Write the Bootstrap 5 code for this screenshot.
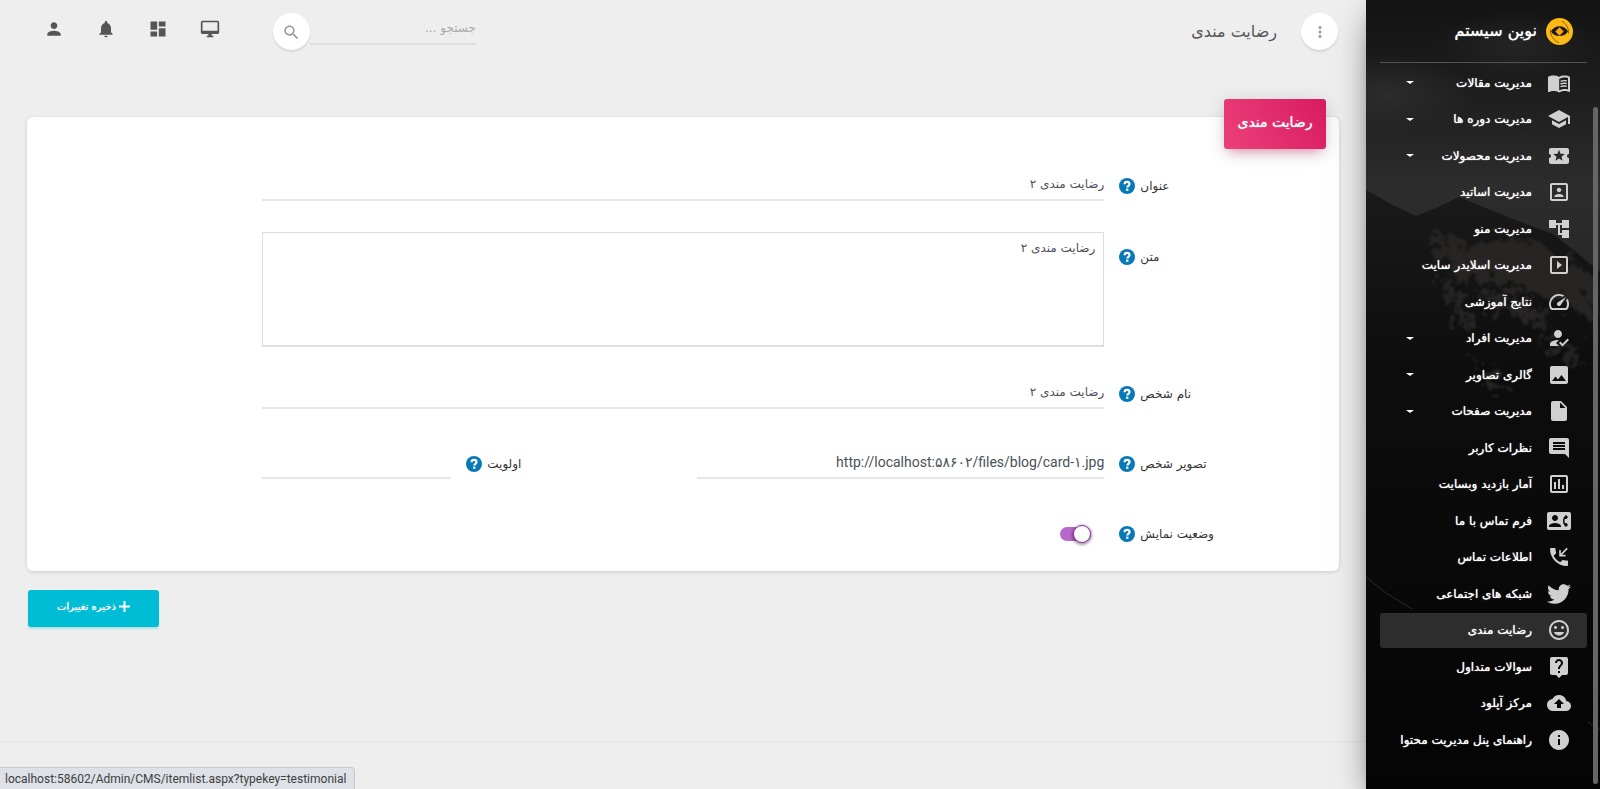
<!DOCTYPE html>
<html lang="fa" dir="rtl">
<head>
<meta charset="utf-8">
<meta name="viewport" content="width=device-width, initial-scale=1">
<title>رضایت مندی</title>
<link href="https://cdn.jsdelivr.net/npm/bootstrap@5.3.0/dist/css/bootstrap.min.css" rel="stylesheet">
<style>
  body { background: #eee; color: #3c4858; font-family: "DejaVu Sans", sans-serif; font-size: 13px; line-height: 20px; }
  svg { fill: currentColor; flex: none; }

  /* sidebar */
  .side { width: 234px; height: 100vh; min-height: 760px; flex: none; z-index: 2; background: #0a0a0a; overflow: visible;
    box-shadow: 0 16px 38px -12px rgba(0,0,0,.56), 0 4px 25px rgba(0,0,0,.12), 0 8px 10px -5px rgba(0,0,0,.2); }
  .side-art { inset: 0; width: 100%; height: 100%; }
  .side-thumb { left: auto; right: 2px; top: 107px; bottom: 5px; width: 5px; border-radius: 3px; background: #666; }
  .brand { margin: 0 13px 0 14px; height: 63px; border-bottom: 1px solid #525252; padding-right: 14px; gap: 9px; color: #fff; font-size: 16px; text-shadow: 0 0 1px #fff; }
  .menu { padding: 2px 13px 30px 14px; display: grid; grid-auto-rows: 1fr; }
  .menu a { height: 35px; border-radius: 3px; padding: 0 16px; gap: 15px; color: #fff; font-size: 12px; text-decoration: none; text-shadow: 0 0 1px #fff; }
  .menu a.active { background: rgba(200,200,200,.2); }
  .menu svg { color: #d0d0d0; }
  .menu .caret { margin-right: auto; margin-left: 10px; border: 4px solid transparent; border-top: 3px solid #fff; border-bottom: 0; }

  /* top bar */
  .topbar { padding: 13px 28px 0; }
  .round-btn { width: 37px; height: 37px; border: 0; border-radius: 50%; background: #fff; color: #999; box-shadow: 0 2px 2px rgba(0,0,0,.1); padding: 0; }
  .page-name { font-size: 16px; color: #555; margin: 0; font-weight: 400; }
  .tools { margin-right: 37px; }
  .tool-btn { width: 52px; height: 32px; border: 0; background: none; color: #555; padding: 0; }
  .line-input { height: 36px; border: 0; border-bottom: 2px solid #e7e7e7; border-radius: 0; background: none; padding: 3px 0 0; font-size: 12px; color: #495057; box-shadow: none; }
  .search-box { width: 166px; height: 32px; border-bottom-color: #dfdfdf; font-size: 12px; padding-top: 0; }
  .search-box::placeholder { color: #aaa; }

  /* form card */
  .panel { margin: 67px 27px 0; border: 0; border-radius: 6px; background: #fff; box-shadow: 0 1px 4px rgba(0,0,0,.14); padding: 0 24px 22px; }
  .panel-tag { width: 102px; height: 50px; margin: -18px -11px 16px 0; border-radius: 3px; background: linear-gradient(60deg, #ec407a, #d81b60); color: #fff; font-size: 14px; font-weight: 400; padding-bottom: 4px; text-shadow: 0 0 1px #fff;
    box-shadow: 0 4px 20px rgba(0,0,0,.14), 0 7px 10px -5px rgba(233,30,99,.4); }
  .field { --bs-gutter-x: 0; margin-bottom: 34px; }
  .field.near { margin-bottom: 31px; }
  .field.tall { margin-bottom: 26px; }
  .field.last { margin-bottom: 0; min-height: 36px; }
  .cap { padding: 11px 0 0 15px; font-size: 12px; color: #333; gap: 5px; justify-content: flex-end; align-items: center; height: 31px; }
  .cap.low { padding-top: 15px; height: 35px; }
  .cap svg { color: #0878b8; }
  .box-input { height: 115px; border: 1px solid #dcdce4; border-bottom: 2px solid #dedede; border-radius: 0; padding: 5px 8px; font-size: 12px; line-height: 20px; color: #495057; resize: none; }
  .url-col { padding-left: 14px; }
  .url { font-family: Roboto, "DejaVu Sans", sans-serif; font-size: 14px; }
  .prio-cap { width: 55%; }
  .prio-in { width: 45%; }
  .switch { appearance: none; width: 31px; height: 14px; border-radius: 7px; background: #b868c8; margin: 14px 13px 0 0; position: relative; }
  .switch::before { content: ""; position: absolute; right: 0; top: -2px; width: 18px; height: 18px; border-radius: 50%; border: 1px solid #9c27b0; background: #fff; box-shadow: 0 1px 3px 1px rgba(0,0,0,.4); }
  .save { margin: 19px 28px 0; width: 131px; height: 37px; border: 0; border-radius: 3px; background: #00bcd4; color: #fff; font-size: 10px; gap: 3px; padding: 0 0 4px; text-shadow: 0 0 1px #fff; box-shadow: 0 2px 2px rgba(0,188,212,.25); }
  .foot { height: 48px; border-top: 1px solid #e5e5e5; }
  .status { left: 0; bottom: 0; height: 22px; padding: 0 8px 0 5px; background: #dee1e6; border: 1px solid #c8cacf; border-width: 1px 1px 0 0; border-radius: 0 4px 0 0; font-family: Roboto, sans-serif; font-size: 12px; line-height: 22px; color: #3c4043; z-index: 3; }
</style>
</head>
<body>
<svg class="d-none">
  <symbol id="help" viewBox="0 0 16 16"><circle cx="8" cy="8" r="8"/><path d="M5.600 6.200C5.600 4.600 6.600 3.900 8 3.900s2.500.800 2.500 2.100c0 1.800-2.200 1.800-2.200 3.400" fill="none" stroke="#fff" stroke-width="2.200"/><rect x="7.100" y="10.600" width="2.300" height="2.200" fill="#fff"/></symbol>
</svg>
<div class="d-flex min-vh-100">
  <aside class="side position-relative d-flex flex-column">
    <svg class="side-art position-absolute" viewBox="0 0 234 789" preserveAspectRatio="none" aria-hidden="true">
      <defs>
        <linearGradient id="sky" x1="0" y1="0" x2="0" y2="1"><stop offset="0" stop-color="#131313"/><stop offset=".12" stop-color="#1e1e1e"/><stop offset=".24" stop-color="#2d2d2d"/><stop offset=".34" stop-color="#282727"/></linearGradient>
        <linearGradient id="rock" gradientUnits="userSpaceOnUse" x1="0" y1="190" x2="0" y2="789"><stop offset="0" stop-color="#1b1a1a"/><stop offset=".3" stop-color="#0d0d0d"/><stop offset="1" stop-color="#040404"/></linearGradient>
        <radialGradient id="cloud"><stop offset="0" stop-color="#2c2c2c"/><stop offset="1" stop-color="#2c2c2c" stop-opacity="0"/></radialGradient>
        <filter id="edge" x="-10%" y="-10%" width="120%" height="120%" color-interpolation-filters="sRGB"><feTurbulence type="fractalNoise" baseFrequency=".09" numOctaves="5" seed="4" result="n"/><feDisplacementMap in="SourceGraphic" in2="n" scale="50" xChannelSelector="R" yChannelSelector="G"/><feGaussianBlur stdDeviation="1"/></filter>
      </defs>
      <rect width="234" height="789" fill="url(#sky)"/>
      <ellipse cx="150" cy="45" rx="80" ry="34" fill="url(#cloud)" opacity=".6"/><ellipse cx="20" cy="95" rx="90" ry="40" fill="url(#cloud)"/>
      <path d="M0 190 25 204 50 216 72 207 93 197 110 204 127 211 160 224 187 234 210 252 234 272V789H0z" fill="url(#rock)"/>
      <g fill="#272524" filter="url(#edge)">
        <path d="M62 232 85 238 112 244 135 238 165 242 200 256 226 280V322L205 305 170 296 140 286 105 282 90 278 66 250zM75 280 90 290 104 330 92 324zM110 290 140 298 170 306 190 330 160 318 125 306zM90 350 115 372 140 376 150 392 120 384zM170 330 210 350 220 366 190 356z"/>
      </g>
      <path d="M0 577l20 16 26 16M222 722l12 8" stroke="#2a2a2a" fill="none"/>
    </svg>
    <span class="side-thumb position-absolute"></span>
    <div class="brand position-relative d-flex align-items-center">
      <svg width="27" height="27" viewBox="0 0 27 27"><circle cx="13.500" cy="13.500" r="13.500" fill="#fdb913"/><path d="M5 13.500C8.500 6.500 18.500 6.500 22 13.500 18.500 19.500 8.500 19.500 5 13.500z" fill="#1a1a1a"/><path d="M13.500 9.300l4.200 4.200-4.200 4.200-4.200-4.200z" fill="#f8a010"/><path d="M4.500 11.500c-.5 6 3 11 8.500 13.300M22.500 15.500c.5-5-2-9.500-6.500-12.300" stroke="#7a5200" fill="none" stroke-width=".9"/></svg>
      <span>نوین سیستم</span>
    </div>
    <nav class="menu position-relative flex-fill">
      <a class="d-flex align-items-center" href="#"><svg width="24" height="24" viewBox="0 0 24 24"><path d="M21 5c-1.110-.35-2.330-.5-3.500-.5-1.950 0-4.050.4-5.500 1.500-1.450-1.100-3.550-1.500-5.500-1.500S2.450 4.900 1 6v14.650c0 .25.25.5.5.5.1 0 .15-.05.25-.05C3.100 20.450 5.050 20 6.500 20c1.950 0 4.050.4 5.500 1.500 1.350-.85 3.800-1.500 5.500-1.500 1.650 0 3.350.3 4.750 1.050.1.050.15.050.25.050.25 0 .5-.25.5-.5V6c-.6-.45-1.250-.75-2-1zm0 13.500c-1.100-.35-2.300-.5-3.500-.5-1.700 0-4.150.65-5.500 1.500V8c1.350-.85 3.800-1.500 5.500-1.500 1.200 0 2.400.15 3.500.5v11.500z"/><path d="M2 6.500c3-1.500 7-1.300 10.200.5v13c-3-1.500-7-1.500-10.200-.5z"/><path d="M13.500 10.300c2-.8 4-.9 6.200-.5M13.500 13c2-.8 4-.9 6.200-.5M13.500 15.700c2-.8 4-.9 6.200-.5" stroke="currentColor" stroke-width="1.400" fill="none"/></svg>مدیریت مقالات<span class="caret"></span></a>
      <a class="d-flex align-items-center" href="#"><svg width="24" height="24" viewBox="0 0 24 24"><path d="M5 13.180v4L12 21l7-3.820v-4L12 17l-7-3.820zM12 3L1 9l11 6 9-4.910V17h2V9L12 3z"/></svg>مدیریت دوره ها<span class="caret"></span></a>
      <a class="d-flex align-items-center" href="#"><svg width="24" height="24" viewBox="0 0 24 24"><path d="M20 12c0-1.100.9-2 2-2V6c0-1.100-.9-2-2-2H4c-1.100 0-1.990.9-1.990 2v4c1.100 0 1.990.9 1.990 2s-.89 2-2 2v4c0 1.100.9 2 2 2h16c1.100 0 2-.9 2-2v-4c-1.100 0-2-.9-2-2zm-4.420 4.800L12 14.500l-3.580 2.300 1.080-4.120-3.290-2.690 4.240-.25L12 5.800l1.540 3.950 4.240.25-3.290 2.690 1.090 4.110z"/></svg>مدیریت محصولات<span class="caret"></span></a>
      <a class="d-flex align-items-center" href="#"><svg width="24" height="24" viewBox="0 0 24 24"><path d="M12 12.250c1.240 0 2.250-1.010 2.250-2.250S13.240 7.750 12 7.750 9.750 8.760 9.750 10s1.010 2.250 2.250 2.250zm4.500 4c0-1.500-3-2.250-4.500-2.250s-4.500.75-4.500 2.250V17h9v-.75zM19 3H5c-1.100 0-2 .9-2 2v14c0 1.100.9 2 2 2h14c1.100 0 2-.9 2-2V5c0-1.100-.9-2-2-2zm0 16H5V5h14v14z"/></svg>مدیریت اساتید</a>
      <a class="d-flex align-items-center" href="#"><svg width="24" height="24" viewBox="0 0 24 24"><path d="M22 11V3h-7v3H9V3H2v8h7V8h2v10h4v3h7v-8h-7v3h-2V8h2v3z"/></svg>مدیریت منو</a>
      <a class="d-flex align-items-center" href="#"><svg width="24" height="24" viewBox="0 0 24 24"><path d="M10 8v8l5-4-5-4zm9-5H5c-1.100 0-2 .9-2 2v14c0 1.100.9 2 2 2h14c1.100 0 2-.9 2-2V5c0-1.100-.9-2-2-2zm0 16H5V5h14v14z"/></svg>مدیریت اسلایدر سایت</a>
      <a class="d-flex align-items-center" href="#"><svg width="24" height="24" viewBox="0 0 24 24"><path d="M20.380 8.570l-1.230 1.850a8 8 0 0 1-.22 7.580H5.070A8 8 0 0 1 15.580 6.850l1.850-1.230A10 10 0 0 0 3.350 19a2 2 0 0 0 1.720 1h13.850a2 2 0 0 0 1.740-1 10 10 0 0 0-.27-10.440zm-9.790 6.840a2 2 0 0 0 2.830 0l5.660-8.490-8.490 5.660a2 2 0 0 0 0 2.830z"/></svg>نتایج آموزشی</a>
      <a class="d-flex align-items-center" href="#"><svg width="24" height="24" viewBox="0 0 24 24"><path d="M9 17l3-2.940c-.39-.04-.68-.06-1-.06-2.670 0-8 1.340-8 4v2h9l-3-3zm2-5c2.210 0 4-1.790 4-4s-1.790-4-4-4-4 1.790-4 4 1.790 4 4 4m4.470 8.500L12 17l1.400-1.410 2.070 2.080 5.130-5.170 1.400 1.410z"/></svg>مدیریت افراد<span class="caret"></span></a>
      <a class="d-flex align-items-center" href="#"><svg width="24" height="24" viewBox="0 0 24 24"><path d="M21 19V5c0-1.100-.9-2-2-2H5c-1.100 0-2 .9-2 2v14c0 1.100.9 2 2 2h14c1.100 0 2-.9 2-2zM8.500 13.500l2.500 3.010L14.500 12l4.500 6H5l3.500-4.500z"/></svg>گالری تصاویر<span class="caret"></span></a>
      <a class="d-flex align-items-center" href="#"><svg width="24" height="24" viewBox="0 0 24 24"><path d="M6 2c-1.100 0-1.990.9-1.990 2L4 20c0 1.100.89 2 1.990 2H18c1.100 0 2-.9 2-2V8l-6-6H6zm7 7V3.500L18.500 9H13z"/></svg>مدیریت صفحات<span class="caret"></span></a>
      <a class="d-flex align-items-center" href="#"><svg width="24" height="24" viewBox="0 0 24 24"><path d="M21.990 4c0-1.100-.89-2-1.990-2H4c-1.100 0-2 .9-2 2v12c0 1.100.9 2 2 2h14l4 4-.01-18zM18 14H6v-2h12v2zm0-3H6V9h12v2zm0-3H6V6h12v2z"/></svg>نظرات کاربر</a>
      <a class="d-flex align-items-center" href="#"><svg width="24" height="24" viewBox="0 0 24 24"><path d="M19 3H5c-1.100 0-2 .9-2 2v14c0 1.100.9 2 2 2h14c1.100 0 2-.9 2-2V5c0-1.100-.9-2-2-2zm0 16H5V5h14v14zM7 10h2v7H7zm4-3h2v10h-2zm4 6h2v4h-2z"/></svg>آمار بازدید وبسایت</a>
      <a class="d-flex align-items-center" href="#"><svg width="24" height="24" viewBox="0 0 24 24"><path d="M22 3H2C.9 3 0 3.900 0 5v14c0 1.100.9 2 2 2h20c1.100 0 1.990-.9 1.990-2L24 5c0-1.100-.9-2-2-2zM8 6c1.660 0 3 1.340 3 3s-1.340 3-3 3-3-1.340-3-3 1.340-3 3-3zm6 12H2v-1c0-2 4-3.100 6-3.100s6 1.100 6 3.100v1zm3.850-4h1.640L21 16l-1.990 1.990c-1.310-.98-2.280-2.380-2.730-3.990-.18-.64-.28-1.310-.28-2s.1-1.360.28-2c.45-1.620 1.420-3.010 2.730-3.990L21 8l-1.510 2h-1.640c-.22.63-.35 1.300-.35 2s.13 1.370.35 2z"/></svg>فرم تماس با ما</a>
      <a class="d-flex align-items-center" href="#"><svg width="24" height="24" viewBox="0 0 24 24"><path d="M20 15.500c-1.250 0-2.450-.2-3.570-.57-.35-.11-.74-.03-1.020.24l-2.200 2.200c-2.830-1.440-5.150-3.750-6.590-6.580l2.200-2.210c.28-.27.36-.66.25-1.010C8.700 6.450 8.500 5.250 8.500 4c0-.55-.45-1-1-1H4c-.55 0-1 .45-1 1 0 9.390 7.610 17 17 17 .55 0 1-.45 1-1v-3.500c0-.55-.45-1-1-1z"/><path d="M20.200 3.400l-6.700 6.700M13 5v5.600h5.600" fill="none" stroke="currentColor" stroke-width="1.600"/></svg>اطلاعات تماس</a>
      <a class="d-flex align-items-center" href="#"><svg width="24" height="24" viewBox="0 0 512 512"><path d="M459.370 151.716c.325 4.548.325 9.097.325 13.645 0 138.720-105.583 298.558-298.558 298.558-59.452 0-114.680-17.219-161.137-47.106 8.447.974 16.568 1.299 25.340 1.299 49.055 0 94.213-16.568 130.274-44.832-46.132-.975-84.792-31.188-98.112-72.772 6.498.974 12.995 1.624 19.818 1.624 9.421 0 18.843-1.300 27.614-3.573-48.081-9.747-84.143-51.980-84.143-102.985v-1.299c13.969 7.797 30.214 12.670 47.431 13.319-28.264-18.843-46.781-51.005-46.781-87.391 0-19.492 5.197-37.360 14.294-52.954 51.655 63.675 129.300 105.258 216.365 109.807-1.624-7.797-2.599-15.918-2.599-24.040 0-57.828 46.782-104.934 104.934-104.934 30.213 0 57.502 12.670 76.670 33.137 23.715-4.548 46.456-13.320 66.599-25.340-7.798 24.366-24.366 44.833-46.132 57.827 21.117-2.273 41.584-8.122 60.426-16.243-14.292 20.791-32.161 39.308-52.628 54.253z"/></svg>شبکه های اجتماعی</a>
      <a class="d-flex align-items-center active" href="#" aria-current="page"><svg width="24" height="24" viewBox="0 0 24 24"><path d="M11.990 2C6.470 2 2 6.480 2 12s4.470 10 9.990 10C17.520 22 22 17.520 22 12S17.520 2 11.990 2zM12 20c-4.420 0-8-3.580-8-8s3.580-8 8-8 8 3.580 8 8-3.580 8-8 8zm3.500-9c.83 0 1.500-.67 1.500-1.500S16.330 8 15.500 8 14 8.670 14 9.500s.67 1.500 1.500 1.500zm-7 0c.83 0 1.500-.67 1.500-1.500S9.330 8 8.500 8 7 8.670 7 9.500 7.670 11 8.500 11zm3.500 6.500c2.330 0 4.310-1.460 5.110-3.500H6.890c.8 2.040 2.780 3.500 5.110 3.500z"/></svg>رضایت مندی</a>
      <a class="d-flex align-items-center" href="#"><svg width="24" height="24" viewBox="0 0 24 24"><path d="M19 2H5c-1.110 0-2 .9-2 2v14c0 1.100.89 2 2 2h4l3 3 3-3h4c1.100 0 2-.9 2-2V4c0-1.100-.9-2-2-2zm-6 16h-2v-2h2v2zm2.070-7.750l-.9.920C13.450 11.900 13 12.500 13 14h-2v-.5c0-1.100.45-2.100 1.170-2.830l1.240-1.260c.37-.36.59-.86.59-1.410 0-1.100-.9-2-2-2s-2 .9-2 2H8c0-2.210 1.790-4 4-4s4 1.790 4 4c0 .88-.36 1.680-.93 2.250z"/></svg>سوالات متداول</a>
      <a class="d-flex align-items-center" href="#"><svg width="24" height="24" viewBox="0 0 24 24"><path d="M19.350 10.040C18.670 6.590 15.640 4 12 4 9.110 4 6.600 5.640 5.350 8.040 2.340 8.360 0 10.910 0 14c0 3.310 2.690 6 6 6h13c2.760 0 5-2.240 5-5 0-2.640-2.050-4.780-4.650-4.960zM14 13v4h-4v-4H7l5-5 5 5h-3z"/></svg>مرکز آپلود</a>
      <a class="d-flex align-items-center" href="#"><svg width="24" height="24" viewBox="0 0 24 24"><path d="M12 2C6.480 2 2 6.480 2 12s4.480 10 10 10 10-4.480 10-10S17.520 2 12 2zm1 15h-2v-6h2v6zm0-8h-2V7h2v2z"/></svg>راهنمای پنل مدیریت محتوا</a>
    </nav>
  </aside>

  <main class="flex-fill d-flex flex-column">
    <header class="topbar d-flex justify-content-between">
      <div class="d-flex align-items-center gap-4">
        <button class="round-btn" type="button" aria-label="منو"><svg width="18" height="18" viewBox="0 0 24 24"><path d="M12 8c1.100 0 2-.9 2-2s-.9-2-2-2-2 .9-2 2 .9 2 2 2zm0 2c-1.100 0-2 .9-2 2s.9 2 2 2 2-.9 2-2-.9-2-2-2zm0 6c-1.100 0-2 .9-2 2s.9 2 2 2 2-.9 2-2-.9-2-2-2z"/></svg></button>
        <h1 class="page-name">رضایت مندی</h1>
      </div>
      <div class="d-flex">
        <form class="d-flex">
          <input class="form-control line-input search-box" type="text" placeholder="جستجو ..." aria-label="جستجو">
          <button class="round-btn" type="button" aria-label="جستجو"><svg width="19" height="19" viewBox="0 0 24 24"><path d="M15.500 14h-.79l-.28-.27C15.410 12.590 16 11.110 16 9.500 16 5.910 13.090 3 9.500 3S3 5.910 3 9.500 5.910 16 9.500 16c1.610 0 3.090-.59 4.230-1.570l.27.280v.79l5 4.990L20.490 19l-4.990-5zm-6 0C7.010 14 5 11.990 5 9.500S7.010 5 9.500 5 14 7.010 14 9.500 11.990 14 9.500 14z"/></svg></button>
        </form>
        <div class="d-flex tools">
          <button class="tool-btn" type="button" aria-label="سایت"><svg width="20" height="20" viewBox="0 0 24 24"><path d="M21 2H3c-1.100 0-2 .9-2 2v12c0 1.100.9 2 2 2h7v2H8v2h8v-2h-2v-2h7c1.100 0 2-.9 2-2V4c0-1.100-.9-2-2-2zm0 12H3V4h18v10z"/></svg></button>
          <button class="tool-btn" type="button" aria-label="داشبورد"><svg width="20" height="20" viewBox="0 0 24 24"><path d="M3 13h8V3H3v10zm0 8h8v-6H3v6zm10 0h8V11h-8v10zm0-18v6h8V3h-8z"/></svg></button>
          <button class="tool-btn" type="button" aria-label="اعلان ها"><svg width="20" height="20" viewBox="0 0 24 24"><path d="M12 22c1.100 0 2-.9 2-2h-4c0 1.100.89 2 2 2zm6-6v-5c0-3.070-1.640-5.640-4.500-6.320V4c0-.83-.67-1.500-1.500-1.500s-1.500.67-1.500 1.500v.68C7.630 5.360 6 7.920 6 11v5l-2 2v1h16v-1l-2-2z"/></svg></button>
          <button class="tool-btn" type="button" aria-label="حساب کاربری"><svg width="20" height="20" viewBox="0 0 24 24"><path d="M12 12c2.210 0 4-1.790 4-4s-1.790-4-4-4-4 1.790-4 4 1.790 4 4 4zm0 2c-2.670 0-8 1.340-8 4v2h16v-2c0-2.660-5.330-4-8-4z"/></svg></button>
        </div>
      </div>
    </header>

    <form>
      <section class="card panel">
        <h2 class="panel-tag d-flex align-items-center justify-content-center">رضایت مندی</h2>
        <div class="row field near">
          <label class="col-2 cap d-flex" for="f1">عنوان <svg width="16" height="16"><use href="#help"/></svg></label>
          <div class="col-8"><input class="form-control line-input" id="f1" type="text" value="رضایت مندی ۲"></div>
        </div>
        <div class="row field tall">
          <label class="col-2 cap low d-flex" for="f2">متن <svg width="16" height="16"><use href="#help"/></svg></label>
          <div class="col-8"><textarea class="form-control box-input" id="f2">رضایت مندی ۲</textarea></div>
        </div>
        <div class="row field">
          <label class="col-2 cap d-flex" for="f3">نام شخص <svg width="16" height="16"><use href="#help"/></svg></label>
          <div class="col-8"><input class="form-control line-input" id="f3" type="text" value="رضایت مندی ۲"></div>
        </div>
        <div class="row field">
          <label class="col-2 cap d-flex" for="f4">تصویر شخص <svg width="16" height="16"><use href="#help"/></svg></label>
          <div class="col-4 url-col"><input class="form-control line-input url text-end" dir="ltr" id="f4" type="text" value="http://localhost:۵۸۶۰۲/files/blog/card-۱.jpg"></div>
          <div class="col-4 d-flex">
            <label class="cap prio-cap d-flex" for="f5">اولویت <svg width="16" height="16"><use href="#help"/></svg></label>
            <div class="prio-in"><input class="form-control line-input" id="f5" type="text"></div>
          </div>
        </div>
        <div class="row field last">
          <label class="col-2 cap d-flex" for="f6">وضعیت نمایش <svg width="16" height="16"><use href="#help"/></svg></label>
          <div class="col-8"><input class="switch" id="f6" type="checkbox" role="switch" checked></div>
        </div>
      </section>
      <div class="d-flex justify-content-end">
        <button class="btn save d-flex align-items-center justify-content-center" type="submit"><svg width="11" height="11" viewBox="0 0 11 11"><path d="M4.500 0h2v4.500H11v2H6.500V11h-2V6.500H0v-2h4.500z"/></svg>ذخیره تغییرات</button>
      </div>
    </form>
    <footer class="foot mt-auto"></footer>
  </main>
</div>
<div class="status position-fixed" dir="ltr">localhost:58602/Admin/CMS/itemlist.aspx?typekey=testimonial</div>
<script src="https://cdn.jsdelivr.net/npm/bootstrap@5.3.0/dist/js/bootstrap.bundle.min.js"></script>
</body>
</html>
